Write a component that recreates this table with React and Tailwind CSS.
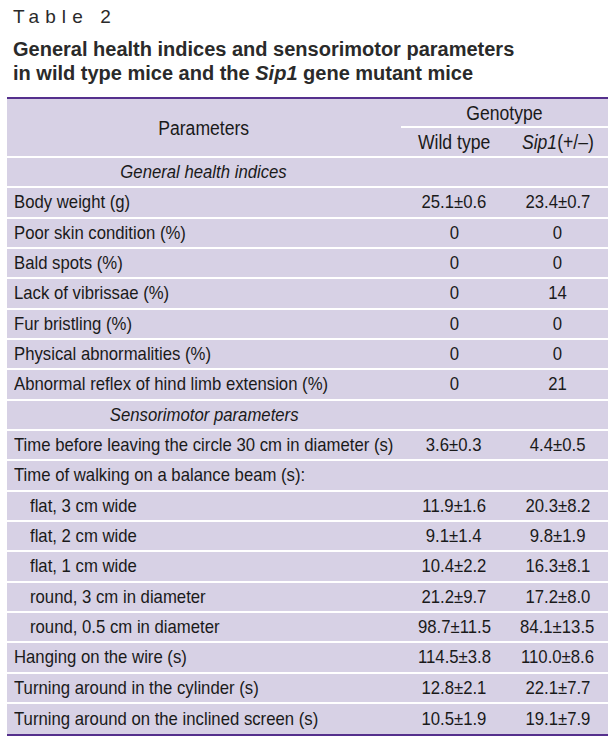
const rows = [
  { type: "section", label: "General health indices" },
  { label: "Body weight (g)", a: "25.1±0.6", b: "23.4±0.7" },
  { label: "Poor skin condition (%)", a: "0", b: "0" },
  { label: "Bald spots (%)", a: "0", b: "0" },
  { label: "Lack of vibrissae (%)", a: "0", b: "14" },
  { label: "Fur bristling (%)", a: "0", b: "0" },
  { label: "Physical abnormalities (%)", a: "0", b: "0" },
  { label: "Abnormal reflex of hind limb extension (%)", a: "0", b: "21" },
  { type: "section", label: "Sensorimotor parameters" },
  { label: "Time before leaving the circle 30 cm in diameter (s)", a: "3.6±0.3", b: "4.4±0.5" },
  { label: "Time of walking on a balance beam (s):", a: "", b: "" },
  { label: "flat, 3 cm wide", a: "11.9±1.6", b: "20.3±8.2", indent: true },
  { label: "flat, 2 cm wide", a: "9.1±1.4", b: "9.8±1.9", indent: true },
  { label: "flat, 1 cm wide", a: "10.4±2.2", b: "16.3±8.1", indent: true },
  { label: "round, 3 cm in diameter", a: "21.2±9.7", b: "17.2±8.0", indent: true },
  { label: "round, 0.5 cm in diameter", a: "98.7±11.5", b: "84.1±13.5", indent: true },
  { label: "Hanging on the wire (s)", a: "114.5±3.8", b: "110.0±8.6" },
  { label: "Turning around in the cylinder (s)", a: "12.8±2.1", b: "22.1±7.7" },
  { label: "Turning around on the inclined screen (s)", a: "10.5±1.9", b: "19.1±7.9" },
];

// narrow text (the table is set in a condensed face)
const N = ({ children, left }) => (
  <span
    className={`inline-block whitespace-nowrap scale-x-[0.88] ${left ? "origin-left" : "origin-center"}`}
  >
    {children}
  </span>
);

export default function App() {
  return (
    <div className="w-[615px] h-[739px] bg-white font-['Liberation_Sans',Arial,sans-serif] text-[#1a1a1a]">
      {/* Caption */}
      <div className="pt-[6px] pl-[13px] text-[19px] leading-[22px] tracking-[0.32em] text-[#2a2a2a]">
        Table 2
      </div>
      <div className="pt-[9px] pl-[13px] text-[20px] leading-[24px] font-bold text-[#2a2a2a]">
        General health indices and sensorimotor parameters
        <br />
        in wild type mice and the <i>Sip1</i> gene mutant mice
      </div>

      {/* Table */}
      <div className="mt-[12px] ml-[7px] w-[601px] bg-[#d7d1e5] border-t-2 border-b-2 border-[#55308d] text-[19px] leading-[22px]">
        {/* Header */}
        <div className="flex border-b-2 border-white text-[20px]">
          <div className="w-[394px] flex items-center justify-center">
            <N>Parameters</N>
          </div>
          <div className="flex-1 flex flex-col">
            <div className="h-[29px] flex items-center justify-center border-b-2 border-white">
              <N>Genotype</N>
            </div>
            <div className="h-[28px] flex items-center">
              <div className="w-[106px] text-center">
                <N>Wild type</N>
              </div>
              <div className="flex-1 text-center">
                <N>
                  <i>Sip1</i>(+/–)
                </N>
              </div>
            </div>
          </div>
        </div>

        {rows.map((r, i) => (
          <div
            key={i}
            className={`h-[30.33px] flex items-center ${i < rows.length - 1 ? "border-b-2 border-white" : ""}`}
          >
            {r.type === "section" ? (
              <div className="w-[394px] text-center italic">
                <N>{r.label}</N>
              </div>
            ) : (
              <>
                <div className={`w-[394px] ${r.indent ? "pl-[23px]" : "pl-[7px]"}`}>
                  <N left>{r.label}</N>
                </div>
                <div className="w-[106px] text-center">
                  <N>{r.a}</N>
                </div>
                <div className="flex-1 text-center">
                  <N>{r.b}</N>
                </div>
              </>
            )}
          </div>
        ))}
      </div>
    </div>
  );
}
